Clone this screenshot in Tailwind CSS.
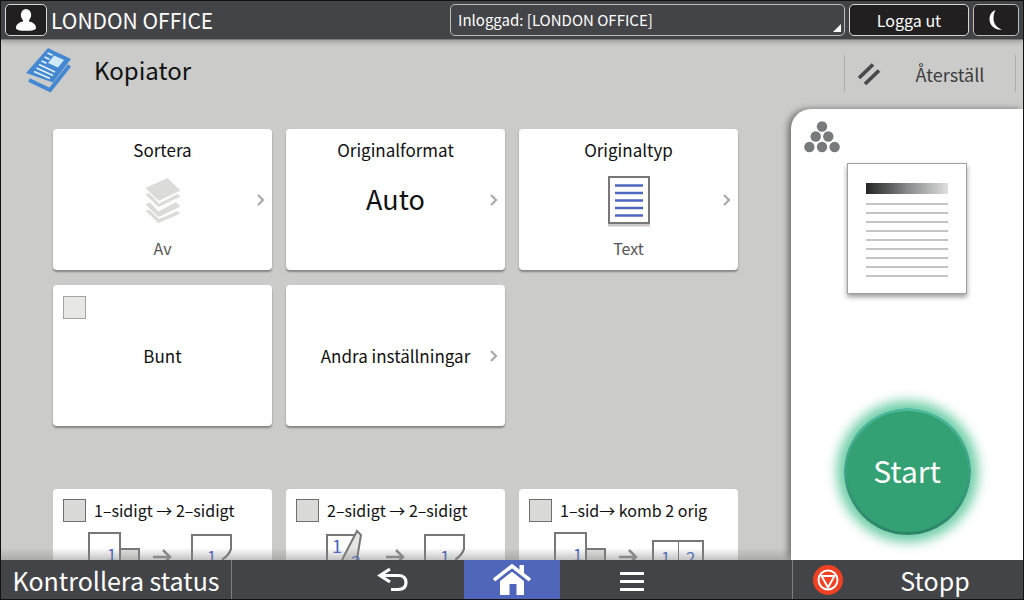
<!DOCTYPE html>
<html lang="sv">
<head>
<meta charset="utf-8">
<meta name="viewport" content="width=device-width, initial-scale=1">
<title>Kopiator</title>
<script src="https://cdn.jsdelivr.net/npm/@tailwindcss/browser@4"></script>
</head>
<body class="flex h-screen flex-col overflow-hidden border border-[#111] bg-[#cbcbc9] font-['Noto_Sans_CJK_JP','Noto_Sans',sans-serif] text-[#111]">

<header class="z-10 flex h-[39px] shrink-0 items-center border-b border-[#7c7c7e] bg-[#434448] pr-1 pl-1 text-white shadow-[0_2px_5px_rgba(0,0,0,0.25)]">
  <button aria-label="Användare" class="flex h-8 w-[42px] items-center justify-center rounded-[5px] border border-[#d8d8d4] bg-[#211f20]">
    <svg width="22" height="24" viewBox="0 0 22 24" fill="#fff"><ellipse cx="11" cy="7" rx="5.2" ry="6"/><path d="M8 11h6v2.500c4 .8 7 2.800 7 6.500 0 2-4 2.800-10 2.800S1 22 1 20c0-3.700 3-5.700 7-6.500z"/></svg>
  </button>
  <span class="ml-1 text-[21px] leading-8 whitespace-nowrap">LONDON OFFICE</span>
  <div class="relative ml-auto">
    <select aria-label="Inloggad användare" class="block h-8 w-[395px] appearance-none rounded-[5px] border border-[#bdbdb9] bg-[#434448] px-[7px] text-[15px] leading-6 text-white">
      <option>Inloggad: [LONDON OFFICE]</option>
    </select>
    <svg class="pointer-events-none absolute right-1 bottom-1" width="8" height="8" viewBox="0 0 8 8" fill="#fff"><path d="M8 0v8H0z"/></svg>
  </div>
  <button class="ml-1 h-8 w-[120px] rounded-[5px] border border-[#d8d8d4] bg-[#211f20] text-base leading-7">Logga ut</button>
  <button aria-label="Viloläge" class="ml-1 flex h-8 w-[46px] items-center justify-center rounded-[5px] border border-[#bdbdb9] bg-[#211f20]">
    <svg width="16" height="22" viewBox="0 0 16 22" fill="#fff"><path d="M7.500 1C3.500 2.500 1.500 6 1.500 10c0 6.500 5.500 11.500 12.500 10.500C8.500 18.500 5.500 14.500 5.500 9.500c0-3 .6-6 2-8.500z"/></svg>
  </button>
</header>

<div class="flex h-[69px] shrink-0 items-start">
  <svg class="mt-[7px] ml-[25px]" width="45" height="46" viewBox="0 0 45 46">
    <path d="M22 1 45 12 27 35.500 0 26z" fill="#4488d2"/>
    <path d="M3 33 24 43 43.500 18.500" fill="none" stroke="#4488d2" stroke-width="4"/>
    <path d="M28 8.500 38 13 32 20.500 22 16z" fill="#cfe9f8"/>
    <path d="M21.500 6l5 2.200M18.500 10l5 2.200M15.500 14l5 2.200M13 17.500 29 25M10.500 21 27 28.500M8 24.500 24 31.500" stroke="#e4f2fb" stroke-width="1.500" fill="none"/>
  </svg>
  <h1 class="mt-2 ml-[23px] text-2xl leading-[44px]">Kopiator</h1>
  <button class="mt-[15px] mr-[7px] ml-auto flex h-[37px] w-[172px] items-center border-x border-[#aeaeac] pl-3 text-[#3c3c3e]">
    <svg width="24" height="24" viewBox="0 0 24 24" stroke="#4a4a4e" stroke-width="3.800" fill="none"><path d="M2 16 16 2.500M8 22 22 8.500"/></svg>
    <span class="flex-1 pl-1 text-center text-lg leading-8">Återställ</span>
  </button>
</div>

<div class="flex min-h-0 flex-1">
  <main class="relative min-w-0 flex-1 overflow-hidden pt-5 pr-[53px] pl-[52px]">
    <div class="grid grid-cols-3 gap-x-3.5 gap-y-[15px]">
      <button class="relative flex h-[141px] flex-col items-center rounded-[4px] bg-white pt-2 shadow-[0_2px_2px_rgba(0,0,0,0.35)]">
        <span class="text-[17px] leading-[26px]">Sortera</span>
        <svg class="mt-3.5" width="36" height="46" viewBox="0 0 36 46" fill="#dbdbd9"><path d="M.5 11 22.500 1 35.500 13.500 13.500 24z"/><path d="M.5 17.500 4 16l10 10.500L32.500 17l3 2.500L13.500 30zM.5 27.500 5 25.500l8.500 9L31 25l4.500 4.500L13.500 40zM.5 34 4 32.500l10 9.500 18.500-8 3 2.500L13.500 46z"/></svg>
        <span class="mt-3 text-base leading-[26px] text-[#555]">Av</span>
        <svg class="absolute top-1/2 right-[6px] -translate-y-1/2" width="9" height="12" viewBox="0 0 9 12" fill="none" stroke="#aaa" stroke-width="2.200"><path d="M1 1l5 5-5 5"/></svg>
      </button>
      <button class="relative flex h-[141px] flex-col items-center rounded-[4px] bg-white pt-2 shadow-[0_2px_2px_rgba(0,0,0,0.35)]">
        <span class="text-[17px] leading-[26px]">Originalformat</span>
        <span class="mt-3.5 text-[27px] leading-[44px]">Auto</span>
        <svg class="absolute top-1/2 right-[6px] -translate-y-1/2" width="9" height="12" viewBox="0 0 9 12" fill="none" stroke="#aaa" stroke-width="2.200"><path d="M1 1l5 5-5 5"/></svg>
      </button>
      <button class="relative flex h-[141px] flex-col items-center rounded-[4px] bg-white pt-2 shadow-[0_2px_2px_rgba(0,0,0,0.35)]">
        <span class="text-[17px] leading-[26px]">Originaltyp</span>
        <svg class="mt-[13px]" width="42" height="51" viewBox="0 0 42 51"><path d="M0 48h42v2.500H0z" fill="#ccc8c6"/><path d="M1 1h40v46H1z" fill="#fff" stroke="#777" stroke-width="2"/><path d="M7 9.500h28M7 17h28M7 24.500h28M7 32h28M7 39.500h28" stroke="#4d67bd" stroke-width="2.600"/></svg>
        <span class="mt-2 text-base leading-[26px] text-[#555]">Text</span>
        <svg class="absolute top-1/2 right-[6px] -translate-y-1/2" width="9" height="12" viewBox="0 0 9 12" fill="none" stroke="#aaa" stroke-width="2.200"><path d="M1 1l5 5-5 5"/></svg>
      </button>
      <label class="relative flex h-[141px] items-center justify-center rounded-[4px] bg-white shadow-[0_2px_2px_rgba(0,0,0,0.35)]">
        <input type="checkbox" class="absolute top-[11px] left-2.5 size-[23px] appearance-none border border-[#a4a4a4] bg-[#e7e7e5]">
        <span class="text-[17px] leading-[26px]">Bunt</span>
      </label>
      <button class="relative flex h-[141px] items-center justify-center rounded-[4px] bg-white shadow-[0_2px_2px_rgba(0,0,0,0.35)]">
        <span class="text-[17px] leading-[26px]">Andra inställningar</span>
        <svg class="absolute top-1/2 right-[6px] -translate-y-1/2" width="9" height="12" viewBox="0 0 9 12" fill="none" stroke="#aaa" stroke-width="2.200"><path d="M1 1l5 5-5 5"/></svg>
      </button>
    </div>

    <div class="mt-[63px] grid grid-cols-3 gap-x-3.5">
      <label class="flex h-[141px] flex-col rounded-[4px] bg-white px-2.5 pt-2">
        <span class="flex items-center gap-2">
          <input type="checkbox" class="size-[23px] shrink-0 appearance-none border border-[#6e6e6e] bg-[#dadad8]">
          <span class="text-base leading-[26px] whitespace-nowrap">1–sidigt → 2–sidigt</span>
        </span>
        <svg class="mt-[3px] ml-[24px]" width="148" height="60" viewBox="0 0 148 60" fill="#fff" stroke="#777" stroke-width="2">
          <path d="M2 7h31v44H2z"/><path d="M33 23h19v28H33z" fill="#e2e2e0"/><path d="M66 31h16M76 24l7 7-7 7" fill="none" stroke="#8a8a8a" stroke-width="2.500"/><path d="M105 9h39v14q-2 6-8 10v18h-31z"/><path d="M144 23q-2 6-8 10" fill="none"/>
          <g fill="#4564c4" stroke="none" font-size="17"><text x="20" y="35">1</text><text x="120" y="37">1</text></g>
        </svg>
      </label>
      <label class="flex h-[141px] flex-col rounded-[4px] bg-white px-2.5 pt-2">
        <span class="flex items-center gap-2">
          <input type="checkbox" class="size-[23px] shrink-0 appearance-none border border-[#6e6e6e] bg-[#dadad8]">
          <span class="text-base leading-[26px] whitespace-nowrap">2–sidigt → 2–sidigt</span>
        </span>
        <svg class="mt-[3px] ml-[24px]" width="148" height="60" viewBox="0 0 148 60" fill="#fff" stroke="#777" stroke-width="2">
          <path d="M7 9h30v42H7z"/><path d="M16 51 23 32 37 5l4 4-7 42z" fill="#e6e6e4"/><path d="M66 31h16M76 24l7 7-7 7" fill="none" stroke="#8a8a8a" stroke-width="2.500"/><path d="M105 9h39v14q-2 6-8 10v18h-31z"/><path d="M144 23q-2 6-8 10" fill="none"/>
          <g fill="#4564c4" stroke="none" font-size="18"><text x="12" y="27">1</text><text x="31" y="43">2</text><text x="120" y="38">1</text></g>
        </svg>
      </label>
      <label class="flex h-[141px] flex-col rounded-[4px] bg-white px-2.5 pt-2">
        <span class="flex items-center gap-2">
          <input type="checkbox" class="size-[23px] shrink-0 appearance-none border border-[#6e6e6e] bg-[#dadad8]">
          <span class="text-base leading-[26px] whitespace-nowrap">1–sid→ komb 2 orig</span>
        </span>
        <svg class="mt-[3px] ml-[24px]" width="160" height="60" viewBox="0 0 160 60" fill="#fff" stroke="#777" stroke-width="2">
          <path d="M2 7h31v44H2z"/><path d="M33 23h19v28H33z" fill="#e2e2e0"/><path d="M66 31h16M76 24l7 7-7 7" fill="none" stroke="#8a8a8a" stroke-width="2.500"/><path d="M100 15h50v36h-50z"/><path d="M125.500 15v36" stroke-width="1"/>
          <g fill="#4564c4" stroke="none" font-size="17"><text x="20" y="35">1</text><text x="108" y="38">1</text><text x="133" y="38">2</text></g>
        </svg>
      </label>
    </div>
    <div class="pointer-events-none absolute inset-x-0 bottom-0 h-3 bg-linear-to-b from-[#888]/0 to-[#888]/50"></div>
  </main>

  <aside class="flex w-[232px] shrink-0 flex-col rounded-tl-[20px] bg-white pt-3 pb-[25px] shadow-[-3px_0_6px_rgba(0,0,0,0.45)]">
    <svg class="ml-[13px]" width="36" height="32" viewBox="0 0 36 32" fill="#777a7a"><circle cx="18" cy="5.500" r="5.200"/><circle cx="11.700" cy="15.500" r="5.200"/><circle cx="24.300" cy="15.500" r="5.200"/><circle cx="5.400" cy="26" r="5.200"/><circle cx="18" cy="26" r="5.200"/><circle cx="30.600" cy="26" r="5.200"/></svg>
    <div class="mx-auto mt-2.5 flex h-[131px] w-[120px] flex-col border border-[#a0a0a0] px-[18px] pt-[19px] shadow-[0_3px_5px_rgba(0,0,0,0.4)]">
      <div class="h-[11px] shrink-0 bg-linear-to-r from-[#252525] via-[#868a8a] to-[#e0dede]"></div>
      <div class="mt-[9px] h-[74px] bg-[repeating-linear-gradient(to_bottom,#c4c4c4_0_2px,transparent_2px_9px)]"></div>
    </div>
    <button class="mx-auto mt-auto flex size-[127px] items-center justify-center rounded-full bg-linear-to-b from-[#4dbd9d] to-[#2a8468] p-[3px] text-white shadow-[0_0_12px_7px_rgba(60,190,135,0.75)]">
      <span class="flex size-full items-center justify-center rounded-full bg-[#33a173] pb-1 text-[30px] leading-10">Start</span>
    </button>
  </aside>
</div>

<footer class="z-10 flex h-[39px] shrink-0 bg-[#434448] text-white">
  <button class="w-[231px] border-r border-[#808082] text-[25px] leading-[38px] whitespace-nowrap">Kontrollera status</button>
  <nav class="flex flex-1 justify-center">
    <button aria-label="Tillbaka" class="flex w-36 items-center justify-center">
      <svg width="32" height="26" viewBox="0 0 32 26" fill="none" stroke="#fff" stroke-width="3.200"><path d="M14 2 4 8.500l10 6.500M4 8.500h18q8 0 8 7t-8 7h-7"/></svg>
    </button>
    <button aria-label="Hem" class="flex w-24 items-center justify-center bg-[#4f66bb]">
      <svg width="38" height="32" viewBox="0 0 38 32"><path d="M1 16 19 2l18 14" fill="none" stroke="#fff" stroke-width="3.600"/><path d="M26.500 1h4.500v9l-4.500-3.500zM7 17 19 7.500 31 17v14h-7.500V20h-7v11H7z" fill="#fff"/><path d="M5 17.500 19 6.500l14 11" fill="none" stroke="#4f66bb" stroke-width="1.200"/><path d="M17 20.500h6V31h-6z" fill="#4f66bb"/></svg>
    </button>
    <button aria-label="Meny" class="flex w-36 items-center justify-center">
      <svg class="mt-1" width="24" height="20" viewBox="0 0 24 20" fill="#fff"><path d="M0 0h24v3H0zM0 8h24v3H0zM0 16h24v3H0z"/></svg>
    </button>
  </nav>
  <button class="flex w-[231px] items-center border-l border-[#808082] pl-5">
    <svg width="30" height="30" viewBox="0 0 30 30"><circle cx="15" cy="15" r="15" fill="#f04123"/><circle cx="15" cy="15" r="9.500" fill="none" stroke="#fff" stroke-width="2"/><path d="M8.500 11h13L15 22.500z" fill="none" stroke="#fff" stroke-width="2"/></svg>
    <span class="flex-1 pl-1 text-center text-[25px] leading-[38px]">Stopp</span>
  </button>
</footer>
</body>
</html>
